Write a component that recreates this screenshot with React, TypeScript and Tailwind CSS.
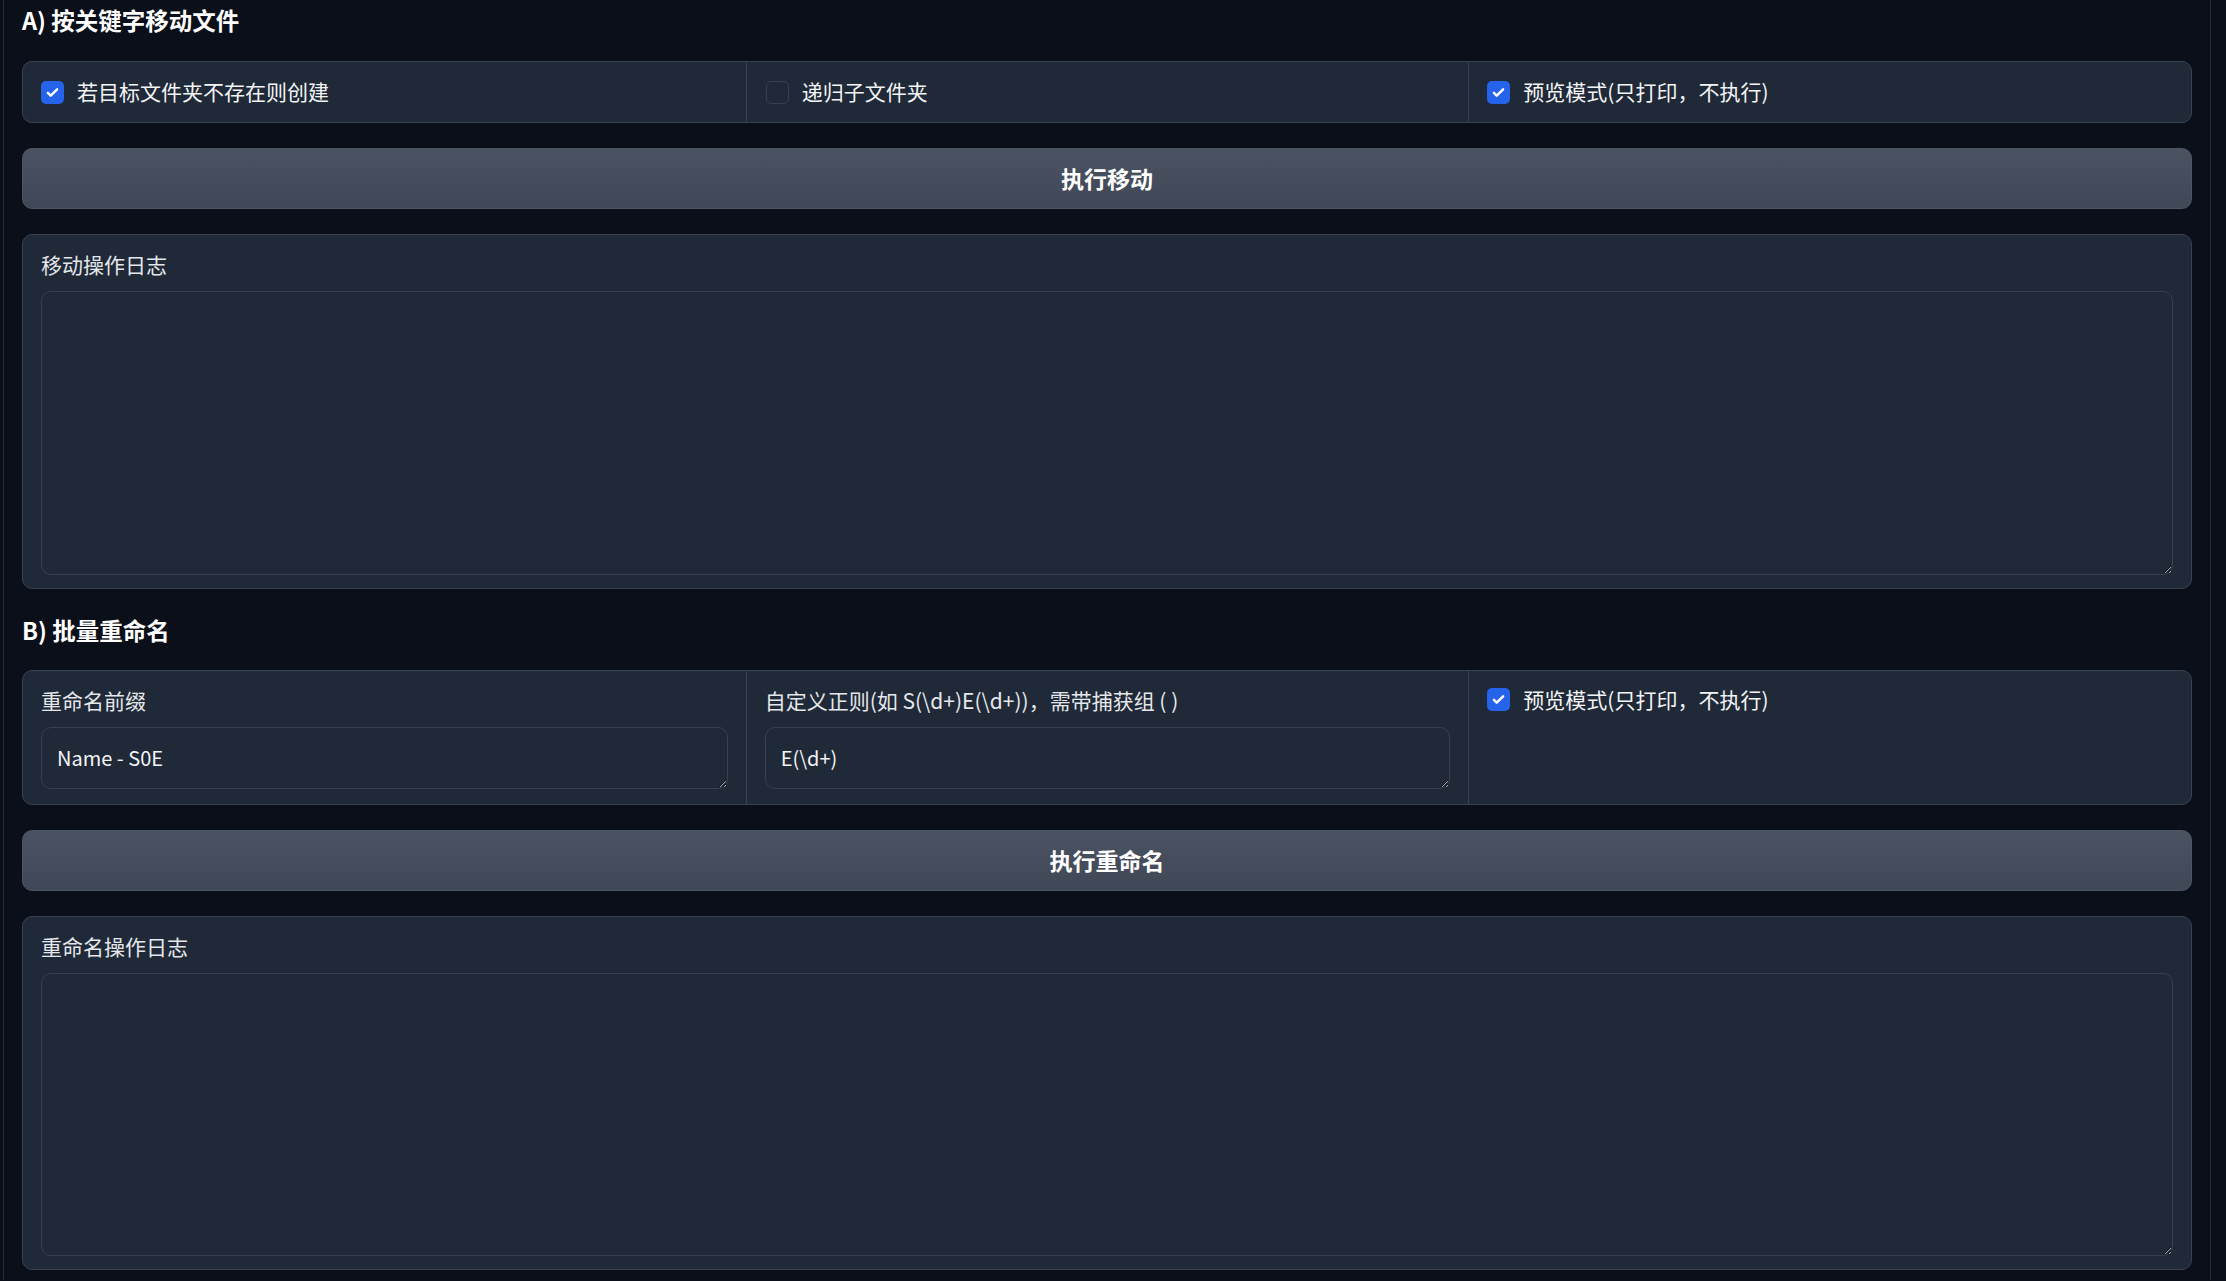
import React from "react";

const font = "font-['Noto_Sans_CJK_SC','Noto_Sans',sans-serif]";

function Check({ checked }: { checked: boolean }) {
  return checked ? (
    <span className="flex h-[23px] w-[23px] shrink-0 items-center justify-center rounded-[5px] bg-[#2563eb]">
      <svg viewBox="0 0 24 24" className="h-[17px] w-[17px]" fill="none" stroke="white" strokeWidth={3.4} strokeLinecap="round" strokeLinejoin="round">
        <path d="M5.5 12.5l4 4L18.5 7.5" />
      </svg>
    </span>
  ) : (
    <span className="h-[23px] w-[23px] shrink-0 rounded-[5px] border border-[#374151] bg-[#1f2937]" />
  );
}

function CheckItem({ checked, label }: { checked: boolean; label: string }) {
  return (
    <div className="flex items-center gap-[13px]">
      <Check checked={checked} />
      <span className="-mt-[2px] text-[21px] leading-[24px] text-[#f3f4f6]">{label}</span>
    </div>
  );
}

function Heading({ children, className = "" }: { children: React.ReactNode; className?: string }) {
  return <div className={`text-[23.5px] font-bold leading-[28px] text-white ${className}`}>{children}</div>;
}

function Btn({ children }: { children: React.ReactNode }) {
  return (
    <div className="mt-[25px] flex h-[61px] items-center justify-center rounded-[10px] border border-[#4b5563] bg-gradient-to-b from-[#4b5363] to-[#404857] text-[23px] font-bold text-white">
      {children}
    </div>
  );
}

function LogPanel({ label, h }: { label: string; h: string }) {
  return (
    <div className={`mt-[25px] flex ${h} flex-col rounded-[10px] border border-[#374151] bg-[#1f2937] px-[18px] pb-[13px] pt-[17px]`}>
      <div className="text-[21px] leading-[24px] text-[#e5e7eb]">{label}</div>
      <textarea
        className="mt-[15px] w-full flex-1 resize-y rounded-[10px] border border-[#374151] bg-[#1f2937] px-[15px] py-[12px] text-[20px] text-[#f3f4f6] outline-none [color-scheme:dark]"
        defaultValue=""
      />
    </div>
  );
}

function InputCol({ label, value, first }: { label: string; value: string; first?: boolean }) {
  return (
    <div className={`flex flex-col px-[18px] pb-[15px] pt-[17px] ${first ? "" : "border-l border-[#374151]"}`}>
      <div className="text-[21px] leading-[24px] text-[#e5e7eb]">{label}</div>
      <textarea
        rows={1}
        className="mt-[15px] h-[62px] w-full resize-y rounded-[10px] border border-[#374151] bg-[#1f2937] px-[15px] py-[16px] text-[20px] leading-[28px] text-[#f3f4f6] outline-none [color-scheme:dark]"
        defaultValue={value}
      />
    </div>
  );
}

export default function App() {
  return (
    <div className={`min-h-screen w-full bg-[#0b0f19] ${font}`}>
      <div className="ml-[3px] w-[2208px] border-x border-[#252b38] pb-[10px] pl-[18px] pr-[18px] pt-[6px]">
        <Heading>A) 按关键字移动文件</Heading>

        <div className="mt-[27px] grid h-[62px] grid-cols-3 rounded-[10px] border border-[#374151] bg-[#1f2937]">
          <div className="flex items-center px-[18px]">
            <CheckItem checked label="若目标文件夹不存在则创建" />
          </div>
          <div className="flex items-center border-l border-[#374151] px-[19px]">
            <CheckItem checked={false} label="递归子文件夹" />
          </div>
          <div className="flex items-center border-l border-[#374151] px-[18px]">
            <CheckItem checked label="预览模式(只打印，不执行)" />
          </div>
        </div>

        <Btn>执行移动</Btn>

        <LogPanel label="移动操作日志" h="h-[355px]" />

        <Heading className="mt-[27px]">B) 批量重命名</Heading>

        <div className="mt-[26px] grid h-[135px] grid-cols-3 rounded-[10px] border border-[#374151] bg-[#1f2937]">
          <InputCol first label="重命名前缀" value="Name - S0E" />
          <InputCol label="自定义正则(如 S(\d+)E(\d+))，需带捕获组 ( )" value="E(\d+)" />
          <div className="flex items-start border-l border-[#374151] px-[18px] pt-[17px]">
            <CheckItem checked label="预览模式(只打印，不执行)" />
          </div>
        </div>

        <Btn>执行重命名</Btn>

        <LogPanel label="重命名操作日志" h="h-[354px]" />
      </div>
    </div>
  );
}
